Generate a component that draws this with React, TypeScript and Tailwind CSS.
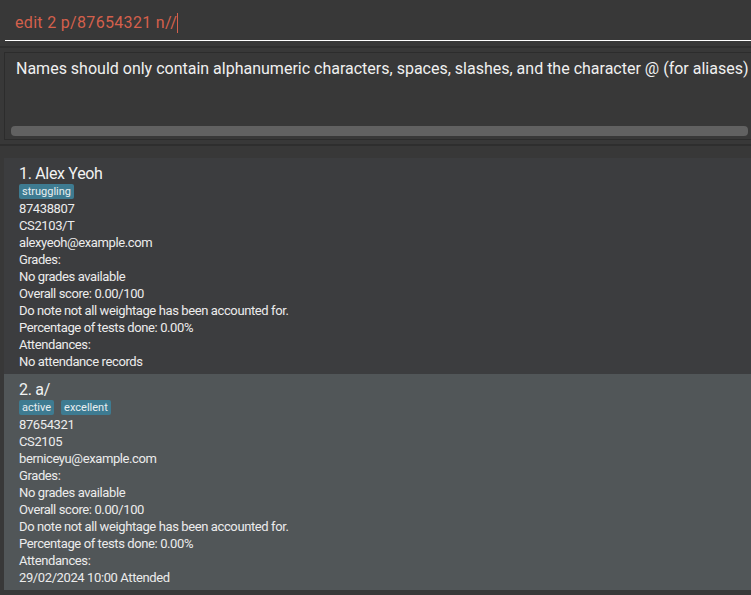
import React from 'react';

interface Person {
  id: number
  name: string
  tags: string[]
  phone: string
  course: string
  email: string
  attendance: string
}

const people: Person[] = [
  {
    id: 1,
    name: 'Alex Yeoh',
    tags: ['struggling'],
    phone: '87438807',
    course: 'CS2103/T',
    email: 'alexyeoh@example.com',
    attendance: 'No attendance records',
  },
  {
    id: 2,
    name: 'a/',
    tags: ['active', 'excellent'],
    phone: '87654321',
    course: 'CS2105',
    email: 'berniceyu@example.com',
    attendance: '29/02/2024 10:00 Attended',
  },
];

const PersonCard: React.FC<{ person: Person; alt: boolean }> = ({ person, alt }) => {
  const lines = [
    person.phone,
    person.course,
    person.email,
    'Grades:',
    'No grades available',
    'Overall score: 0.00/100',
    'Do note not all weightage has been accounted for.',
    'Percentage of tests done: 0.00%',
    'Attendances:',
    person.attendance,
  ];
  return (
    <div className={`${alt ? 'bg-[#515658]' : 'bg-[#3c3d3f]'} h-[216px] pl-[15px] pt-[6px]`}>
      <div className="text-[16px] leading-[20px] text-[#f2f2f2] tracking-[-0.02em]">
        {person.id}. {person.name}
      </div>
      <div className="flex gap-[7px] mb-[1px]">
        {person.tags.map((t) => (
          <span
            key={t}
            className="bg-[#3e7b91] text-[#e8eef0] text-[11px] leading-[15px] px-[3px] rounded-[2px]"
          >
            {t}
          </span>
        ))}
      </div>
      {lines.map((l, i) => (
        <div key={i} className="text-[13px] leading-[17px] text-[#ececec] tracking-[-0.03em]">
          {l}
        </div>
      ))}
    </div>
  );
};

export default function App() {
  return (
    <div className="w-[751px] h-[595px] overflow-hidden bg-[#383838] font-['Roboto',sans-serif]">
      <div className="ml-[5px] h-[41px] border-b border-white flex items-center pl-[10px] pt-[6px]">
        <span className="text-[16px] text-[#d4604c] tracking-[0.02em]">edit 2 p/87654321 n//</span>
        <span className="w-px h-[20px] bg-[#d4604c]" />
      </div>
      <div className="mt-[5px] border-t-2 border-[#2f2f2f]" />
      <div className="mt-[4px] ml-[4px] h-[88px] border border-r-0 border-[#2c2c2c] flex flex-col">
        <div className="pl-[11px] pt-[6px] text-[16px] leading-[20px] text-[#f0f0f0] whitespace-nowrap overflow-hidden">
          Names should only contain alphanumeric characters, spaces, slashes, and the character @ (for aliases)
        </div>
        <div className="mt-auto mb-[3px] ml-[6px] mr-[3px] h-[10px] rounded-[4px] bg-[#616161]" />
      </div>
      <div className="mt-[4px] border-t-2 border-[#2e2e2e]" />
      <div className="mt-[12px] ml-[4px] flex flex-col">
        {people.map((p, i) => (
          <PersonCard key={p.id} person={p} alt={i % 2 === 1} />
        ))}
      </div>
    </div>
  );
}
